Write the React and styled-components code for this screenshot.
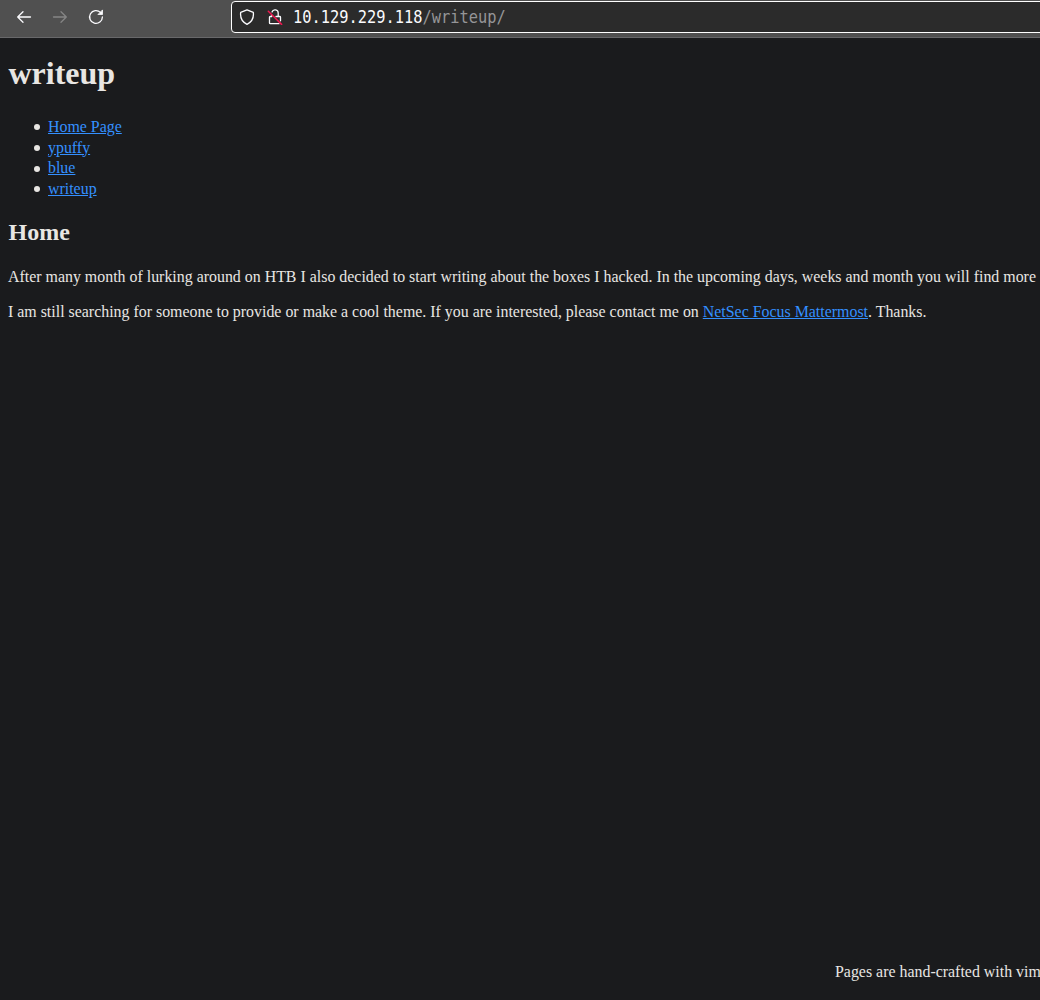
import React from "react";
import styled, { createGlobalStyle } from "styled-components";

const GlobalStyle = createGlobalStyle`
  html, body { margin: 0; background: #1a1b1d; }
  body { overflow: hidden; }
`;

const Window = styled.div`
  display: flex;
  flex-direction: column;
  height: 1000px;
  overflow: hidden;
  background: #1a1b1d;
  color: #e8e6e3;
  font-family: "Liberation Serif", "Times New Roman", serif;
  font-size: 15.92px;
`;

const Toolbar = styled.header`
  display: flex;
  flex: none;
  height: 38px;
  box-sizing: border-box;
  background: #505050;
  border-bottom: 1px solid #68686a;
`;

const NavButtons = styled.nav`
  display: flex;
  gap: 20px;
  width: 231px;
  padding: 9px 0 0 16px;
  box-sizing: border-box;
  flex: none;
`;

const NavButton = styled.button`
  display: block;
  width: 16px;
  height: 16px;
  padding: 0;
  border: 0;
  background: none;
  color: ${(p) => (p.$dim ? "#858585" : "#fbfbfe")};
`;

const Icon = styled.svg`
  display: block;
  width: 16px;
  height: 16px;
  flex: none;
  fill: none;
  stroke: currentColor;
  stroke-width: 1.3;
  stroke-linecap: round;
  stroke-linejoin: round;
`;

const AddressBar = styled.div`
  display: flex;
  flex: none;
  width: 830px;
  height: 32px;
  margin-top: 1px;
  padding: 7px 0 0 7px;
  box-sizing: border-box;
  border: 1px solid #fff;
  border-radius: 4px;
  background: #2b2b2b;
  color: #fbfbfe;
  gap: 12px;
`;

const Url = styled.span`
  height: 24px;
  margin: -4px 0 0 -2px;
  font: 16.8px/25px "DejaVu Sans Mono", monospace;
  white-space: pre;
  transform: scaleX(0.915);
  transform-origin: 0 0;
`;

const UrlPath = styled.span`
  color: #959597;
`;

const Page = styled.main`
  display: flex;
  flex: 1;
  flex-direction: column;
  padding: 16px 3px 0 8px;
  white-space: nowrap;
`;

const Title = styled.h1`
  margin: 0 0 25px;
  padding-left: 0.5px;
  font-size: 32px;
  line-height: 38px;
`;

const Menu = styled.ul`
  margin: 0 0 19px;
  padding-left: 40px;
  line-height: 20.6px;
  list-style: none;
`;

const MenuItem = styled.li`
  position: relative;

  &::before {
    content: "";
    position: absolute;
    left: -14px;
    top: 7.4px;
    width: 6px;
    height: 6px;
    border-radius: 50%;
    background: #e8e6e3;
  }
`;

const Link = styled.a`
  color: #3490ff;
  text-decoration: underline;
`;

const Heading = styled.h2`
  margin: 0 0 21px;
  padding-left: 0.5px;
  font-size: 24px;
  line-height: 28px;
`;

const Paragraph = styled.p`
  margin: 0 0 15px;
  line-height: 20px;
`;

const Footer = styled.footer`
  margin: auto 0 18px 827px;
  line-height: 20px;
`;

const links = ["Home Page", "ypuffy", "blue", "writeup"];

export default function App() {
  return (
    <Window>
      <GlobalStyle />
      <Toolbar>
        <NavButtons>
          <NavButton aria-label="Back">
            <Icon viewBox="0 0 16 16"><path d="M14.5 8H1.7M7 2.7 1.7 8 7 13.3" /></Icon>
          </NavButton>
          <NavButton $dim aria-label="Forward">
            <Icon viewBox="0 0 16 16"><path d="M1.5 8h12.8M9 2.7 14.3 8 9 13.3" /></Icon>
          </NavButton>
          <NavButton aria-label="Reload">
            <Icon viewBox="0 0 16 16">
              <path d="M12.5 3.4A6.4 6.4 0 1 0 14.4 8" />
              <path d="M14.5 1.3v4.2h-4.2z" fill="currentColor" strokeWidth="0.8" />
            </Icon>
          </NavButton>
        </NavButtons>
        <AddressBar>
          <Icon viewBox="0 0 16 16">
            <path d="M8 .8 14.3 3.3Q15.4 11.5 8 15.3Q.6 11.5 1.7 3.3Z" />
          </Icon>
          <Icon viewBox="0 0 16 16">
            <path d="M5 3A3.2 3.2 0 0 1 11.2 4.2V7M9 7.5h3.7q.8 0 .8.8v3.5M4.8 6.2v1.3H3.3q-.8 0-.8.8v5.6q0 .8.8.8h8.7" />
            <path d="M1.3 2.3 14.6 15.4" style={{ stroke: "#f01850", strokeWidth: 1.5 }} />
          </Icon>
          <Url>10.129.229.118<UrlPath>/writeup/</UrlPath></Url>
        </AddressBar>
      </Toolbar>
      <Page>
        <Title>writeup</Title>
        <Menu>
          {links.map((name) => (
            <MenuItem key={name}><Link href="#">{name}</Link></MenuItem>
          ))}
        </Menu>
        <Heading>Home</Heading>
        <Paragraph>After many month of lurking around on HTB I also decided to start writing about the boxes I hacked. In the upcoming days, weeks and month you will find more</Paragraph>
        <Paragraph>
          I am still searching for someone to provide or make a cool theme. If you are interested, please contact me on <Link href="#">NetSec Focus Mattermost</Link>. Thanks.
        </Paragraph>
        <Footer>Pages are hand-crafted with vim</Footer>
      </Page>
    </Window>
  );
}
